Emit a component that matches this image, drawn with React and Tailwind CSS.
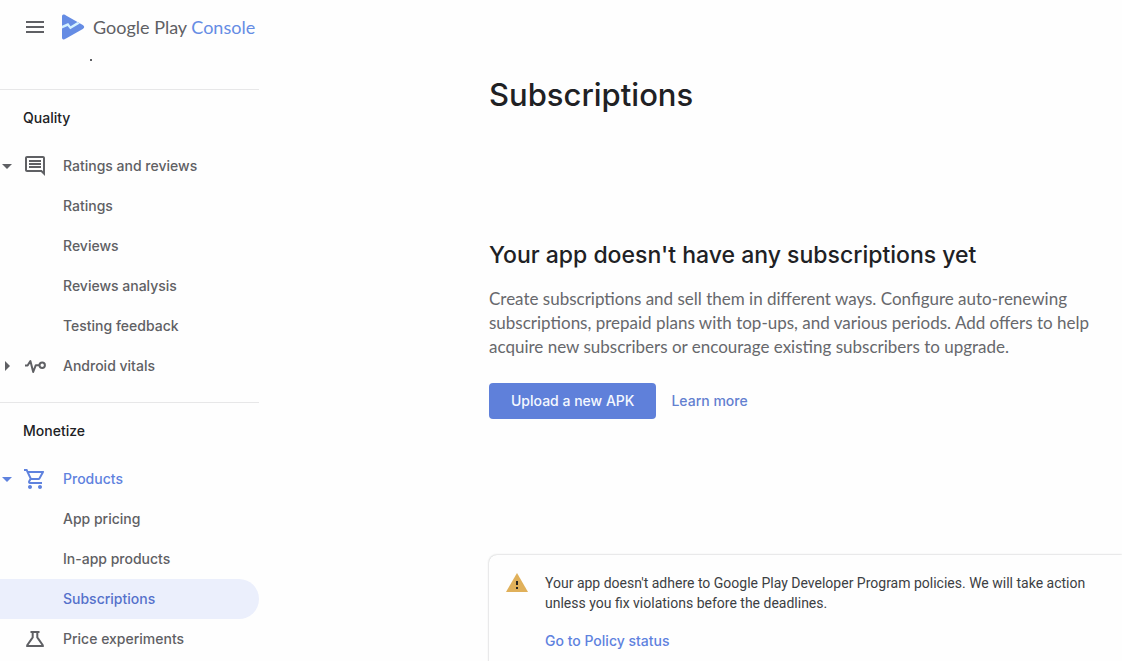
import React from "react";

function Caret({ open }) {
  return (
    <svg className="size-6 shrink-0" viewBox="0 0 24 24" fill="currentColor" aria-hidden="true">
      <path d={open ? "M7 10l5 5 5-5z" : "M10 17l5-5-5-5z"} />
    </svg>
  );
}

function CommentIcon() {
  return (
    <svg className="size-6" viewBox="0 0 24 24" fill="currentColor" aria-hidden="true">
      <path d="M21.99 4c0-1.1-.89-2-1.99-2H4c-1.1 0-2 .9-2 2v12c0 1.1.9 2 2 2h14l4 4-.01-18zM20 4v13.17L18.83 16H4V4h16zM6 12h12v2H6zm0-3h12v2H6zm0-3h12v2H6z" />
    </svg>
  );
}

function VitalsIcon() {
  return (
    <svg className="size-6" viewBox="0 0 24 24" fill="none" stroke="currentColor" strokeWidth="2" strokeLinejoin="round" aria-hidden="true">
      <path d="M2 11.6h2.6L7.4 7L10.2 18L12.8 11.2H16.3" />
      <circle cx="19.2" cy="11.2" r="2.7" />
    </svg>
  );
}

function CartIcon() {
  return (
    <svg className="size-6" viewBox="0 0 24 24" fill="currentColor" aria-hidden="true">
      <path d="M15.55 13c.75 0 1.41-.41 1.75-1.03l3.58-6.49A.996.996 0 0 0 20.01 4H5.21l-.94-2H1v2h2l3.6 7.59-1.35 2.44C4.52 15.37 5.48 17 7 17h12v-2H7l1.1-2h7.45zM6.16 6h12.15l-2.76 5H8.53L6.16 6zM7 18c-1.1 0-1.99.9-1.99 2S5.9 22 7 22s2-.9 2-2-.9-2-2-2zm10 0c-1.1 0-1.99.9-1.99 2s.89 2 1.99 2 2-.9 2-2-.9-2-2-2z" />
    </svg>
  );
}

function FlaskIcon() {
  return (
    <svg className="size-6" viewBox="0 0 24 24" fill="none" stroke="currentColor" strokeWidth="2" aria-hidden="true">
      <path d="M7.5 5h9M9.7 5v5.4L4.2 18.2V19h15.6v-.8L14.3 10.4V5" />
    </svg>
  );
}

function WarningIcon() {
  return (
    <svg className="size-6 shrink-0" viewBox="0 0 24 24" aria-hidden="true">
      <path d="M1 21h22L12 2z" fill="#e0b05a" />
      <path d="M11 10h2v4h-2zM11 16h2v2h-2z" fill="#26241f" />
    </svg>
  );
}

function PlayLogo() {
  return (
    <svg className="h-[26px] w-6" viewBox="0 0 24 26" aria-hidden="true">
      <path d="M1 2.2Q1 .2 3 .6Q4 .7 5 1.4L21.8 11Q24.6 13 21.8 15L5 24.6Q4 25.3 3 25.4Q1 25.8 1 23.8Z" fill="#658ce4" />
      <path d="M1 11.8L7.2 9L9.6 12.2L16.4 8L18.8 9.4L9.2 15.2L6.6 12L1 14.6Z" fill="#d3f1ff" />
    </svg>
  );
}

function NavItem({ label, icon, open, color = "text-[#5f6064]", selected = false }) {
  return (
    <li>
      <a
        href="#"
        aria-current={selected ? "page" : undefined}
        className={`flex h-10 items-center text-sm font-medium ${
          selected ? "rounded-r-full bg-[#ebeffc] text-[#5571cb]" : color
        }`}
      >
        <span className="-ml-[5px] flex w-6 shrink-0">{open !== undefined && <Caret open={open} />}</span>
        <span className="ml-1 flex w-10 shrink-0">{icon}</span>
        {label}
      </a>
    </li>
  );
}

function NavSection({ title, children }) {
  return (
    <section className="border-t border-[#e7e7e8] pb-4">
      <h2 className="flex h-14 items-center pl-[23px] text-sm font-medium text-[#202124]">{title}</h2>
      <ul>{children}</ul>
    </section>
  );
}

export default function App() {
  return (
    <div className="flex h-screen overflow-hidden bg-[#fefefe] font-['Inter','Roboto',sans-serif]">
      <aside className="w-[259px] shrink-0">
        <header className="flex h-[54px] items-center pl-[23px] text-[#5f6064]">
          <button type="button" aria-label="Menu" className="flex">
            <svg className="size-6" viewBox="0 0 24 24" fill="currentColor" aria-hidden="true">
              <path d="M3 18h18v-2H3v2zm0-5h18v-2H3v2zm0-7v2h18V6H3z" />
            </svg>
          </button>
          <a href="#" className="ml-[14px] flex items-center gap-2 whitespace-nowrap font-['Lato','Roboto',sans-serif] text-lg">
            <PlayLogo />
            <span>
              Google Play <span className="text-[#658ce4]">Console</span>
            </span>
          </a>
        </header>
        <div className="h-[35px] pl-[90px] pt-[5px]">
          <div className="size-[2px] bg-[#5f6064]" />
        </div>
        <nav>
          <NavSection title="Quality">
            <NavItem label="Ratings and reviews" icon={<CommentIcon />} open={true} />
            <NavItem label="Ratings" />
            <NavItem label="Reviews" />
            <NavItem label="Reviews analysis" />
            <NavItem label="Testing feedback" />
            <NavItem label="Android vitals" icon={<VitalsIcon />} open={false} />
          </NavSection>
          <NavSection title="Monetize">
            <NavItem label="Products" icon={<CartIcon />} open={true} color="text-[#5f82de]" />
            <NavItem label="App pricing" />
            <NavItem label="In-app products" />
            <NavItem label="Subscriptions" selected />
            <NavItem label="Price experiments" icon={<FlaskIcon />} />
          </NavSection>
        </nav>
      </aside>

      <main className="min-w-0 flex-1 pl-[230px] pt-[73px]">
        <h1 className="text-[31px] leading-[44px] font-medium text-[#202124]">Subscriptions</h1>
        <section className="mt-[122px] pr-6">
          <h2 className="text-[23px] leading-8 font-medium text-[#202124]">Your app doesn't have any subscriptions yet</h2>
          <p className="mt-4 max-w-[600px] font-['Lato','Roboto',sans-serif] text-[17px] leading-6 text-[#67686c]">
            Create subscriptions and sell them in different ways. Configure auto-renewing subscriptions, prepaid plans with
            top-ups, and various periods. Add offers to help acquire new subscribers or encourage existing subscribers to
            upgrade.
          </p>
          <div className="mt-6 flex items-center gap-[15px] text-sm font-medium">
            <button type="button" className="h-9 rounded bg-[#5f80da] px-[22px] text-[#f5f8ff]">
              Upload a new APK
            </button>
            <a href="#" className="text-[#6380d0]">
              Learn more
            </a>
          </div>
        </section>
        <section className="mt-[136px] flex gap-4 rounded-tl-lg bg-[#fefefe] pb-6 pl-4 pt-4 shadow-[0_0_2px_rgba(60,64,67,0.4)]">
          <WarningIcon />
          <div className="pt-[2px] font-['Roboto',sans-serif] text-sm leading-5 text-[#3c4043]">
            <p>
              Your app doesn't adhere to Google Play Developer Program policies. We will take action unless you fix
              violations before the deadlines.
            </p>
            <a href="#" className="mt-[18px] inline-block font-['Inter','Roboto',sans-serif] font-medium text-[#5f82de]">
              Go to Policy status
            </a>
          </div>
        </section>
      </main>
    </div>
  );
}
